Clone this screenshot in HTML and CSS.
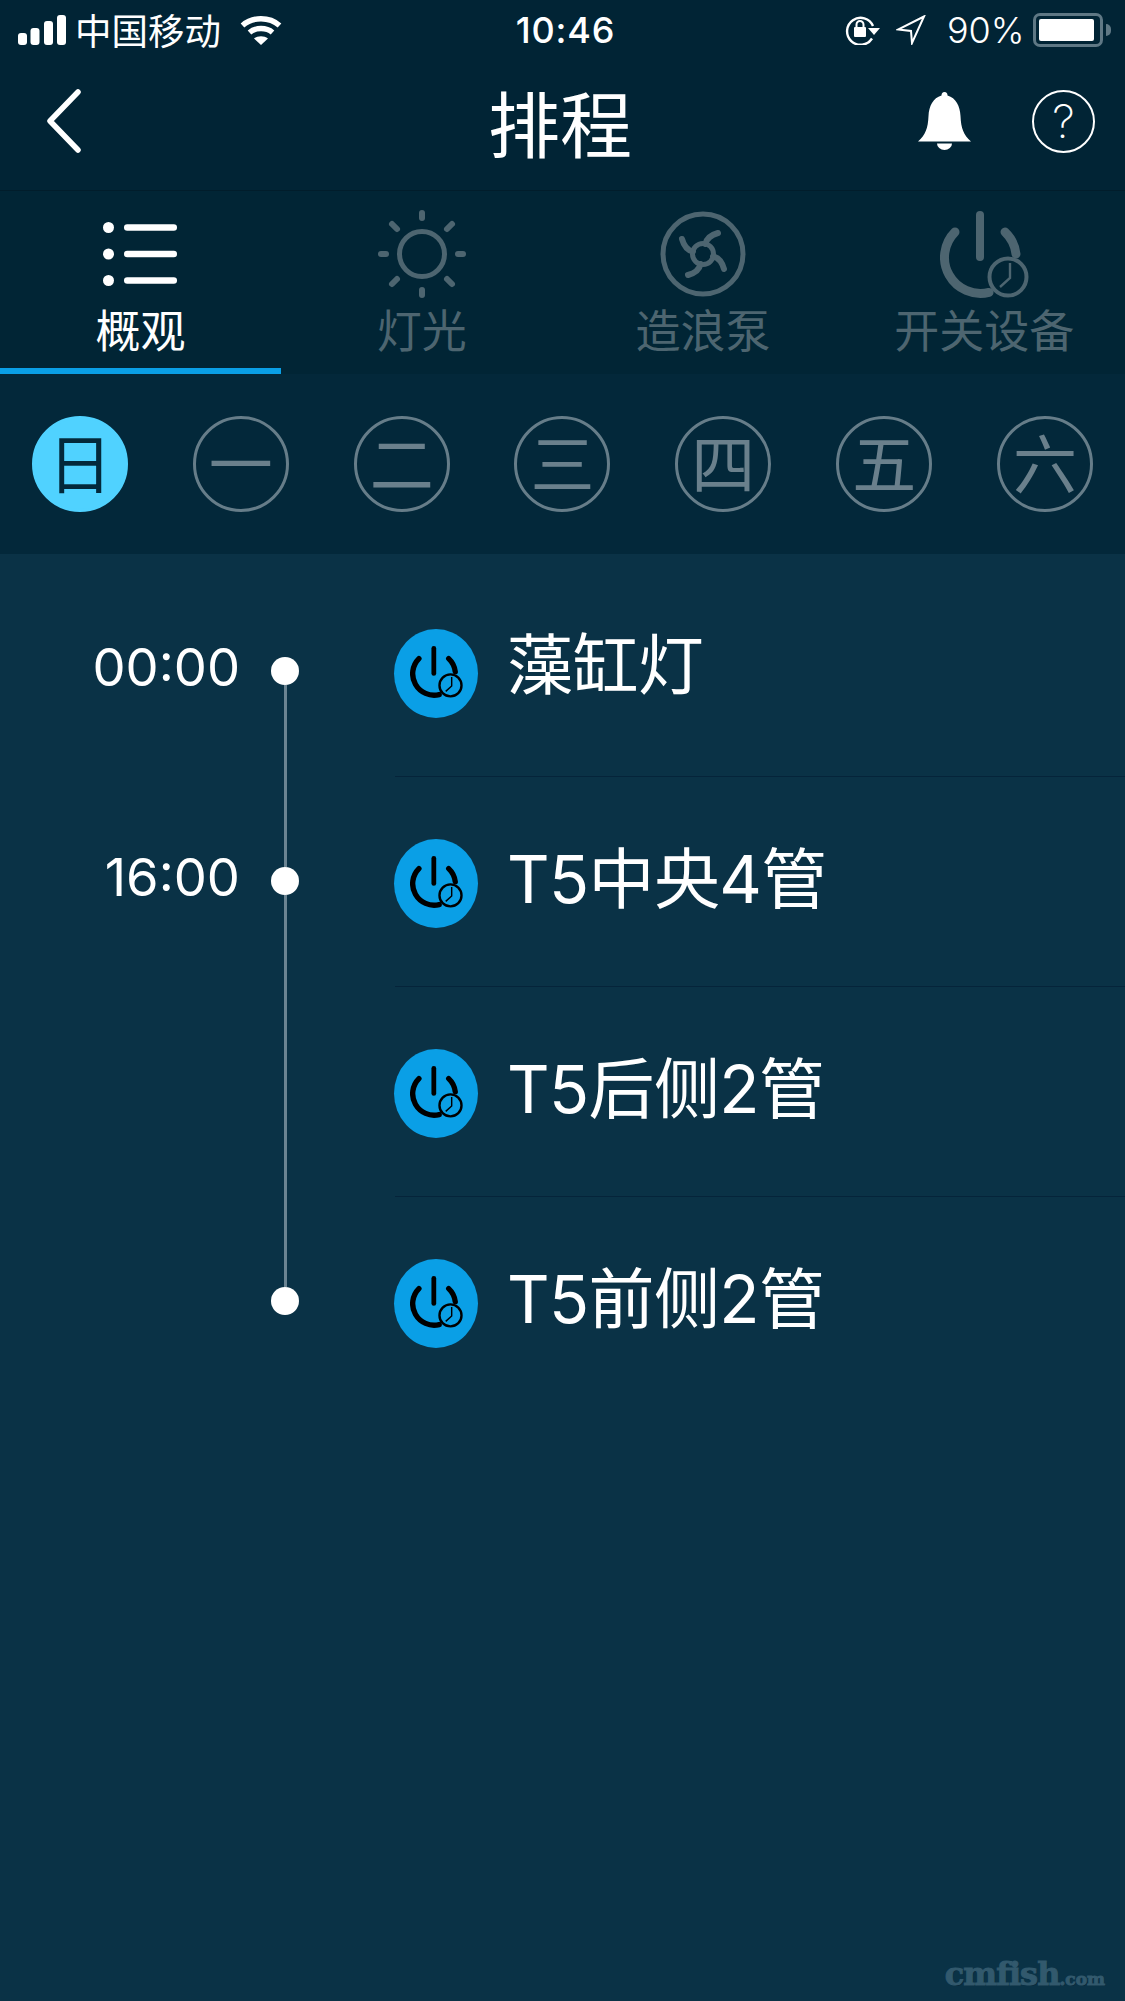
FILE: index.html
```html
<!DOCTYPE html>
<html lang="zh">
<head>
<meta charset="utf-8">
<title>排程</title>
<link rel="stylesheet" href="styles.css">
</head>
<body>
<svg class="defs" width="0" height="0" aria-hidden="true">
  <symbol id="power-timer" viewBox="0 0 89 87">
    <path d="M15 21A36 36 0 0 0 49 81.400" fill="none" stroke="currentColor" stroke-width="9" stroke-linecap="round"/>
    <path d="M65 21A36 36 0 0 1 76 43" fill="none" stroke="currentColor" stroke-width="9" stroke-linecap="round"/>
    <rect x="36" y="0" width="8" height="50" rx="4" fill="currentColor"/>
    <circle cx="68" cy="66" r="18.500" fill="none" stroke="currentColor" stroke-width="4"/>
    <path d="M70 52V67L60 76" fill="none" stroke="currentColor" stroke-width="2.400"/>
  </symbol>
</svg>
<main class="screen">
  <header class="top">
    <div class="status">
      <div class="status-left">
        <svg class="signal" width="48" height="30" viewBox="0 0 48 30"><rect x="0" y="18" width="9" height="12" rx="3"/><rect x="12.500" y="13" width="9" height="17" rx="3"/><rect x="26" y="6" width="9" height="24" rx="3"/><rect x="39" y="0" width="9" height="30" rx="3"/></svg>
        <span class="carrier">中国移动</span>
        <svg class="wifi" width="42" height="30" viewBox="0 0 42 30"><path d="M2.500 10.500C12.500 1.500 29.500 1.500 39.500 10.500" fill="none" stroke="#fff" stroke-width="5.500"/><path d="M9.500 17.500C15.500 12.300 26.500 12.300 32.500 17.500" fill="none" stroke="#fff" stroke-width="5.500"/><path d="M14 23.500C18 20.500 24 20.500 28 23.500L21 30Z" fill="#fff"/></svg>
      </div>
      <div class="clock">10:46</div>
      <div class="status-right">
        <svg class="rotlock" width="35" height="30" viewBox="0 0 35 30"><path d="M27 23.500A13.500 13.500 0 1 1 28 11" fill="none" stroke="#fff" stroke-width="2.400"/><path d="M23 13H35L29 20Z" fill="#fff"/><rect x="9" y="12" width="12" height="10" rx="1" fill="#fff"/><path d="M11.500 12V9.500A3.500 3.500 0 0 1 18.500 9.500V12" fill="none" stroke="#fff" stroke-width="2"/></svg>
        <svg class="locate" width="30" height="30" viewBox="0 0 30 30"><path d="M28 1.500L2 14.500L15 16L16 28Z" fill="none" stroke="#fff" stroke-width="2" stroke-linejoin="miter"/></svg>
        <span class="percent">90%</span>
        <div class="battery"><div class="battery-fill"></div></div>
        <div class="battery-nub"></div>
      </div>
    </div>
    <nav class="nav">
      <div class="nav-side">
        <svg class="back" width="36" height="64" viewBox="0 0 36 64"><path d="M32 3L4 32L32 61" fill="none" stroke="#fff" stroke-width="5.500" stroke-linecap="round" stroke-linejoin="round"/></svg>
      </div>
      <h1 class="title">排程</h1>
      <div class="nav-side nav-right">
        <svg class="bell" width="53" height="58" viewBox="0 0 53 58"><path d="M26.500 0c2 0 3 1.500 3 3.500C38 6 42 14 42.500 24c.5 12 3 19 10.500 25.500H0C7.500 43 10 36 10.500 24 11 14 15 6 23.500 3.500 23.500 1.500 24.500 0 26.500 0Z" fill="#fff"/><path d="M19 51.500h15a7.500 6.500 0 0 1-15 0Z" fill="#fff"/></svg>
        <div class="help">?</div>
      </div>
    </nav>
  </header>

  <section class="tabs">
    <div class="tab active">
      <div class="tab-icon">
        <svg width="76" height="64" viewBox="0 0 76 64"><circle cx="5.500" cy="5.500" r="5.500" fill="#fff"/><circle cx="5.500" cy="32" r="5.500" fill="#fff"/><circle cx="5.500" cy="58.500" r="5.500" fill="#fff"/><rect x="21" y="2.200" width="53" height="6.500" rx="3.200" fill="#fff"/><rect x="21" y="28.800" width="53" height="6.500" rx="3.200" fill="#fff"/><rect x="21" y="55.300" width="53" height="6.500" rx="3.200" fill="#fff"/></svg>
      </div>
      <div class="tab-label">概观</div>
    </div>
    <div class="tab">
      <div class="tab-icon">
        <svg width="90" height="90" viewBox="-45 -45 90 90"><circle r="22.500" fill="none" stroke="#4d6570" stroke-width="5"/><g stroke="#4d6570" stroke-width="6" stroke-linecap="round"><path d="M0-41V-36"/><path d="M0 36V41"/><path d="M-41 0H-36"/><path d="M36 0H41"/><path d="M-30-30L-25-25"/><path d="M30-30L25-25"/><path d="M-30 30L-25 25"/><path d="M30 30L25 25"/></g></svg>
      </div>
      <div class="tab-label">灯光</div>
    </div>
    <div class="tab">
      <div class="tab-icon">
        <svg width="90" height="90" viewBox="-45 -45 90 90"><circle r="40" fill="none" stroke="#4d6570" stroke-width="5"/><circle r="10.500" fill="none" stroke="#4d6570" stroke-width="5"/><g fill="none" stroke="#4d6570" stroke-width="6" stroke-linecap="round"><path d="M2.500-10Q4-18 15-21"/><path d="M2.500-10Q4-18 15-21" transform="rotate(90)"/><path d="M2.500-10Q4-18 15-21" transform="rotate(180)"/><path d="M2.500-10Q4-18 15-21" transform="rotate(270)"/></g></svg>
      </div>
      <div class="tab-label">造浪泵</div>
    </div>
    <div class="tab">
      <div class="tab-icon">
        <svg class="tab-power" width="89" height="87"><use href="#power-timer"/></svg>
      </div>
      <div class="tab-label">开关设备</div>
    </div>
  </section>

  <section class="days">
    <div class="day selected">日</div>
    <div class="day">一</div>
    <div class="day">二</div>
    <div class="day">三</div>
    <div class="day">四</div>
    <div class="day">五</div>
    <div class="day">六</div>
  </section>

  <section class="timeline">
    <div class="row">
      <div class="time">00:00</div>
      <div class="track"><div class="seg-top seg-none"></div><div class="dot"></div><div class="seg-rest"></div></div>
      <div class="item">
        <div class="badge"><svg width="53" height="52"><use href="#power-timer"/></svg></div>
        <div class="name name-cjk">藻缸灯</div>
      </div>
    </div>
    <div class="row">
      <div class="time">16:00</div>
      <div class="track"><div class="seg-top"></div><div class="dot"></div><div class="seg-rest"></div></div>
      <div class="item">
        <div class="badge"><svg width="53" height="52"><use href="#power-timer"/></svg></div>
        <div class="name">T5中央4管</div>
      </div>
    </div>
    <div class="row">
      <div class="time"></div>
      <div class="track"><div class="seg-rest"></div></div>
      <div class="item">
        <div class="badge"><svg width="53" height="52"><use href="#power-timer"/></svg></div>
        <div class="name">T5后侧2管</div>
      </div>
    </div>
    <div class="row">
      <div class="time"></div>
      <div class="track"><div class="seg-top"></div><div class="dot"></div></div>
      <div class="item last">
        <div class="badge"><svg width="53" height="52"><use href="#power-timer"/></svg></div>
        <div class="name">T5前侧2管</div>
      </div>
    </div>
  </section>

  <div class="watermark"><span class="wm-main">cmfish</span><span class="wm-sub">.com</span></div>
</main>
</body>
</html>
```
FILE: styles.css
```css
* { box-sizing: border-box; }
html, body { margin: 0; padding: 0; }
body {
  background: #0a3246;
  color: #fff;
  font-family: Inter, "Noto Sans CJK SC", sans-serif;
}
.defs { position: absolute; }
.screen {
  position: relative;
  width: 1125px;
  height: 2001px;
  overflow: hidden;
  display: flex;
  flex-direction: column;
  background: #0a3246;
}

/* header */
.top { background: #012435; height: 190px; }
.status {
  height: 60px;
  display: grid;
  grid-template-columns: 1fr auto 1fr;
  align-items: center;
}
.status-left { display: flex; align-items: center; padding-left: 18px; }
.signal { fill: #fff; }
.carrier {
  font-family: "Noto Sans CJK SC", sans-serif;
  font-size: 36.500px;
  line-height: 60px;
  margin-left: 9px;
}
.wifi { margin-left: 19px; }
.clock { font-size: 36px; font-weight: 500; letter-spacing: 0.8px; line-height: 60px; padding-left: 6px; }
.status-right { display: flex; align-items: center; justify-content: flex-end; padding-right: 14px; }
.locate { margin-left: 16px; }
.percent { font-size: 36px; font-weight: 300; margin-left: 20.500px; line-height: 60px; }
.battery {
  width: 70px;
  height: 34px;
  margin-left: 8.500px;
  border: 3px solid #5f7885;
  border-radius: 7px;
  padding: 3px;
}
.battery-fill { width: 55px; height: 22px; background: #fff; border-radius: 2px; }
.battery-nub {
  width: 5px;
  height: 12px;
  margin-left: 3px;
  background: #5f7885;
  border-radius: 0 5px 5px 0;
}
.nav {
  height: 130px;
  display: grid;
  grid-template-columns: 1fr auto 1fr;
  align-items: center;
  padding-bottom: 8px;
}
.nav-side { display: flex; align-items: center; }
.back { margin-left: 46px; }
.title {
  margin: 0;
  padding-right: 5px;
  font-family: "Noto Sans CJK SC", sans-serif;
  font-weight: 400;
  font-size: 72px;
  line-height: 90px;
}
.nav-right { justify-content: flex-end; padding-right: 30px; }
.help {
  width: 63px;
  height: 63px;
  margin-left: 61px;
  border: 2px solid #fff;
  border-radius: 50%;
  display: flex;
  align-items: center;
  justify-content: center;
  font-size: 46px;
  font-weight: 200;
}

/* tabs */
.tabs {
  display: flex;
  height: 184px;
  background: #012535;
  border-top: 1px solid #011d2b;
}
.tab {
  flex: 1;
  display: flex;
  flex-direction: column;
  align-items: center;
  color: #4d6570;
  padding-top: 18px;
}
.tab.active { color: #fff; border-bottom: 6px solid #0a9fe6; }
.tab-icon { height: 90px; display: flex; align-items: center; justify-content: center; }
.tab-power { color: #4d6570; }
.tab-label {
  font-family: "Noto Sans CJK SC", sans-serif;
  font-size: 45px;
  line-height: 44px;
  margin-top: 8px;
}

/* days */
.days {
  height: 180px;
  display: flex;
  justify-content: space-between;
  padding: 42px 32px;
  background: #03283a;
}
.day {
  width: 96px;
  height: 96px;
  padding-bottom: 8px;
  border: 3px solid #667d89;
  border-radius: 50%;
  display: flex;
  align-items: center;
  justify-content: center;
  font-family: "Noto Sans CJK SC", sans-serif;
  font-size: 64px;
  line-height: 1;
  color: #6a808c;
}
.day.selected { background: #50d2ff; border-color: #50d2ff; color: #03283a; }

/* timeline */
.timeline { padding-top: 13px; }
.row { display: flex; height: 210px; }
.time {
  width: 240px;
  padding-top: 68px;
  text-align: right;
  font-size: 52.500px;
  font-weight: 400;
  line-height: 64px;
}
.track {
  width: 28px;
  margin-left: 31px;
  display: flex;
  flex-direction: column;
  align-items: center;
}
.dot { width: 28px; height: 28px; flex: none; border-radius: 50%; background: #fff; }
.seg-top, .seg-rest { width: 3px; background: #6b8492; }
.seg-top { height: 90px; flex: none; }
.seg-none { background: transparent; }
.seg-rest { flex: 1; }
.item {
  flex: 1;
  margin-left: 96px;
  display: flex;
  align-items: flex-start;
  padding-top: 62px;
  border-bottom: 1px solid #05243a;
}
.item.last { border-bottom: 0; }
.badge {
  width: 84px;
  height: 89px;
  margin-left: -1px;
  flex: none;
  border-radius: 50%;
  background: #0a9fe6;
  color: #000;
  display: flex;
  align-items: center;
  justify-content: center;
  padding: 0 0 4px 1px;
}
.name {
  margin-left: 29px;
  font-size: 66px;
  letter-spacing: -0.600px;
  line-height: 80px;
}
.name-cjk { margin-top: -4px; }

/* watermark */
.watermark {
  position: absolute;
  right: 20px;
  bottom: 8px;
  color: #32596d;
  font-family: "DejaVu Serif", serif;
  font-weight: 700;
  white-space: nowrap;
  text-shadow: 1px 1px 0 #08283a;
  -webkit-text-stroke: 1px #32596d;
}
.wm-main { font-size: 32px; letter-spacing: -1px; }
.wm-sub { font-size: 17px; }
```
